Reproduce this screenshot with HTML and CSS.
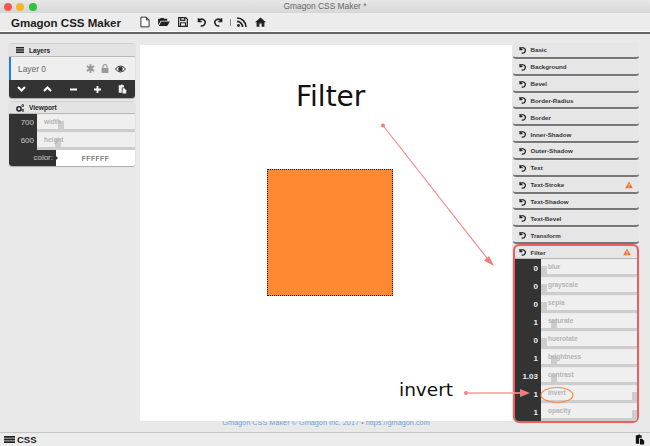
FILE: index.html
```html
<!DOCTYPE html>
<html lang="en">
<head>
    <meta charset="UTF-8">
    <title>Gmagon CSS Maker</title>
    <link rel="stylesheet" href="styles.css">
</head>
<body>
<svg class="defs" width="0" height="0">
    <symbol id="undo" viewBox="0 0 12 12"><path d="M3 1.6V5.4H6.8M3.4 4.8A4 4 0 1 1 5.6 10.4" fill="none" stroke="currentColor" stroke-width="1.9"/></symbol>
    <symbol id="warn" viewBox="0 0 12 12"><path d="M6 .8L11.6 11H.4Z" fill="#e8702a"/><path d="M5.4 4H6.6V8H5.4ZM5.4 8.8H6.6V10H5.4Z" fill="#fff"/></symbol>
    <symbol id="copy" viewBox="0 0 12 12"><path d="M1 1H4V0H6V1H8V4H5V11H1Z" fill="currentColor"/><path d="M6 5H8.5L11 7.5V12H6Z" fill="currentColor"/></symbol>
</svg>
<div class="app">
    <div class="titlebar">
        <span class="light red"></span><span class="light yellow"></span><span class="light green"></span>
        <span class="wintitle">Gmagon CSS Maker *</span>
    </div>
    <div class="toolbar">
        <span class="brand">Gmagon CSS Maker</span>
        <div class="tools">
            <svg width="10" height="12" viewBox="0 0 11 12"><path d="M1 .7H7L10 3.7V11.3H1ZM7 .7V3.7H10" fill="#fff" stroke="#222" stroke-width="1"/></svg>
            <svg width="12" height="10" viewBox="0 0 13 11"><path d="M0 2H2L3 1H6L7 2H10V4H3L0 9ZM3.5 5H13L10 10H.8Z" fill="#222"/></svg>
            <svg width="10" height="10" viewBox="0 0 11 11"><path d="M.7 .7H8.5L10.3 2.5V10.3H.7ZM3 .7V3.7H7.5V.7M2.7 10.3V6.3H8.3V10.3" fill="none" stroke="#222" stroke-width="1.3"/></svg>
            <svg class="tool-undo" width="10" height="10"><use href="#undo"/></svg>
            <svg class="tool-redo" width="10" height="10"><use href="#undo"/></svg>
            <span class="sep"></span>
            <svg width="10" height="10" viewBox="0 0 10 10"><circle cx="1.5" cy="8.5" r="1.4" fill="#222"/><path d="M0 4.4A5.6 5.6 0 0 1 5.6 10M0 1A9 9 0 0 1 9 10" fill="none" stroke="#222" stroke-width="1.7"/></svg>
            <svg width="11" height="10" viewBox="0 0 11 10"><path d="M5.5 .4L11 5.2H9.4V9.8H6.6V6.6H4.4V9.8H1.6V5.2H0Z" fill="#222"/></svg>
        </div>
    </div>
    <div class="main">
        <div class="leftcol">
            <div class="panel">
                <div class="panel-head">
                    <svg width="8" height="6" viewBox="0 0 8 6"><path d="M0 0H8V1.5H0ZM0 2.2H8V3.7H0ZM0 4.4H8V6H0Z" fill="#222"/></svg>
                    <span>Layers</span>
                </div>
                <div class="layer">
                    <span class="layer-name">Layer 0</span>
                    <svg class="layer-ico" width="9" height="9" viewBox="0 0 9 9"><path d="M3.6 0H5.4V2.6L7.7 1.3 8.6 2.8 6.3 4.5 8.6 6.2 7.7 7.7 5.4 6.4V9H3.6V6.4L1.3 7.7.4 6.2 2.7 4.5.4 2.8 1.3 1.3 3.6 2.6Z" fill="#999"/></svg>
                    <svg class="layer-ico" width="8" height="9" viewBox="0 0 8 9"><path d="M2 4V2.6A2 2 0 0 1 6 2.6V4" fill="none" stroke="#999" stroke-width="1.1"/><path d="M.6 4H7.4V9H.6Z" fill="#999"/></svg>
                    <svg class="layer-ico" width="11" height="8" viewBox="0 0 11 8"><path d="M.4 4Q5.5-2 10.6 4 5.5 10 .4 4Z" fill="none" stroke="#333" stroke-width="1"/><circle cx="5.5" cy="4" r="2.3" fill="#333"/></svg>
                </div>
                <div class="layer-actions">
                    <svg width="9" height="6" viewBox="0 0 9 6"><path d="M1 1L4.5 4.5 8 1" fill="none" stroke="#fff" stroke-width="2"/></svg>
                    <svg width="9" height="6" viewBox="0 0 9 6"><path d="M1 5L4.5 1.5 8 5" fill="none" stroke="#fff" stroke-width="2"/></svg>
                    <svg width="7" height="7" viewBox="0 0 7 7"><path d="M0 2.6H7V4.4H0Z" fill="#fff"/></svg>
                    <svg width="7" height="7" viewBox="0 0 7 7"><path d="M2.6 0H4.4V2.6H7V4.4H4.4V7H2.6V4.4H0V2.6H2.6Z" fill="#fff"/></svg>
                    <svg class="white-ico" width="9" height="10"><use href="#copy"/></svg>
                </div>
            </div>
            <div class="panel">
                <div class="panel-head vp-head">
                    <svg width="8" height="8" viewBox="0 0 8 8"><circle cx="3" cy="4.8" r="2.1" fill="none" stroke="#222" stroke-width="1.5"/><circle cx="6.8" cy="1.6" r="1" fill="none" stroke="#222"/><circle cx="6.8" cy="6.4" r="1" fill="none" stroke="#222"/></svg>
                    <span>Viewport</span>
                </div>
                <div class="slider vp">
                    <div class="val">700</div>
                    <div class="track"><span class="name">width</span><span class="thumb" style="left:21px"></span></div>
                </div>
                <div class="slider vp">
                    <div class="val">600</div>
                    <div class="track"><span class="name">height</span><span class="thumb" style="left:18px"></span></div>
                </div>
                <div class="colorrow">
                    <div class="colorlabel">color:</div>
                    <div class="colorval">FFFFFF</div>
                </div>
            </div>
        </div>
        <div class="centercol">
            <div class="canvas">
                <div class="demo-box"></div>
                <span class="note note-filter">Filter</span>
                <span class="note note-invert">invert</span>
            </div>
            <div class="copyright">Gmagon CSS Maker © Gmagon Inc. 2017 • https://gmagon.com</div>
        </div>
        <div class="rightcol">
            <div class="sect"><svg class="sect-undo"><use href="#undo"/></svg><span>Basic</span></div>
            <div class="sect"><svg class="sect-undo"><use href="#undo"/></svg><span>Background</span></div>
            <div class="sect"><svg class="sect-undo"><use href="#undo"/></svg><span>Bevel</span></div>
            <div class="sect"><svg class="sect-undo"><use href="#undo"/></svg><span>Border-Radius</span></div>
            <div class="sect"><svg class="sect-undo"><use href="#undo"/></svg><span>Border</span></div>
            <div class="sect"><svg class="sect-undo"><use href="#undo"/></svg><span>Inner-Shadow</span></div>
            <div class="sect"><svg class="sect-undo"><use href="#undo"/></svg><span>Outer-Shadow</span></div>
            <div class="sect"><svg class="sect-undo"><use href="#undo"/></svg><span>Text</span></div>
            <div class="sect"><svg class="sect-undo"><use href="#undo"/></svg><span>Text-Stroke</span><svg class="sect-warn"><use href="#warn"/></svg></div>
            <div class="sect"><svg class="sect-undo"><use href="#undo"/></svg><span>Text-Shadow</span></div>
            <div class="sect"><svg class="sect-undo"><use href="#undo"/></svg><span>Text-Bevel</span></div>
            <div class="sect"><svg class="sect-undo"><use href="#undo"/></svg><span>Transform</span></div>
            <div class="filter">
                <div class="sect filter-head"><svg class="sect-undo"><use href="#undo"/></svg><span>Filter</span><svg class="sect-warn"><use href="#warn"/></svg></div>
                <div class="slider fl"><div class="val">0</div><div class="track"><span class="name">blur</span><span class="thumb" style="left:0"></span></div></div>
                <div class="slider fl"><div class="val">0</div><div class="track"><span class="name">grayscale</span><span class="thumb" style="left:0"></span></div></div>
                <div class="slider fl"><div class="val">0</div><div class="track"><span class="name">sepia</span><span class="thumb" style="left:0"></span></div></div>
                <div class="slider fl"><div class="val">1</div><div class="track"><span class="name">saturate</span><span class="thumb" style="left:10px"></span></div></div>
                <div class="slider fl"><div class="val">0</div><div class="track"><span class="name">huerotate</span><span class="thumb" style="left:0"></span></div></div>
                <div class="slider fl"><div class="val">1</div><div class="track"><span class="name">brightness</span><span class="thumb" style="left:10px"></span></div></div>
                <div class="slider fl"><div class="val">1.03</div><div class="track"><span class="name">contrast</span><span class="thumb" style="left:10px"></span></div></div>
                <div class="slider fl"><div class="val">1</div><div class="track"><span class="name">invert</span><span class="thumb" style="left:91px"></span></div></div>
                <div class="slider fl"><div class="val">1</div><div class="track"><span class="name">opacity</span><span class="thumb" style="left:91px"></span></div></div>
            </div>
        </div>
    </div>
    <div class="bottombar">
        <svg width="11" height="7" viewBox="0 0 11 7"><path d="M0 0H11V1.8H0ZM0 2.6H11V4.4H0ZM0 5.2H11V7H0Z" fill="#222"/></svg>
        <span class="bottom-label">CSS</span>
        <svg class="bottom-copy" width="10" height="11"><use href="#copy"/></svg>
    </div>
    <svg class="annotations" width="650" height="446" viewBox="0 0 650 446">
        <path d="M383 125.500L490 262" stroke="#f28b8b" stroke-width="1.200" fill="none"/>
        <circle cx="383" cy="125.500" r="2" fill="#f27c7c"/>
        <path d="M494 266L484 260.500 489 256Z" fill="#f27c7c"/>
        <circle cx="466" cy="393" r="2" fill="#f27c7c"/>
        <path d="M466 393H522" stroke="#f79a9a" stroke-width="1.500"/>
        <path d="M530 393L520 389V397Z" fill="#f27c7c"/>
        <ellipse cx="557" cy="395" rx="16" ry="7.500" fill="none" stroke="#ee8c4e" stroke-width="1.200"/>
    </svg>
</div>
</body>
</html>
```

FILE: styles.css
```css
*{
    box-sizing: border-box;
}
body{
    margin: 0;
    font-family: "Liberation Sans", Arial, sans-serif;
    background-color: #e9e9e9;
    color: #222;
    overflow: hidden;
}
.defs{
    display: block;
    height: 0;
}
.app{
    position: relative;
    width: 650px;
    height: 446px;
    display: flex;
    flex-direction: column;
    overflow: hidden;
}

/* title bar */
.titlebar{
    position: relative;
    height: 13px;
    flex: none;
    display: flex;
    align-items: center;
    gap: 4.500px;
    padding-left: 3.500px;
    background: linear-gradient(#e8e8e8, #d6d6d6);
}
.light{
    width: 8px;
    height: 8px;
    border-radius: 50%;
}
.red{ background-color: #f4574f; }
.yellow{ background-color: #f6b42a; }
.green{ background-color: #2fc13f; }
.wintitle{
    position: absolute;
    left: 0;
    right: 0;
    top: 0;
    text-align: center;
    font-size: 8.400px;
    line-height: 13px;
    color: #666;
}

/* toolbar */
.toolbar{
    height: 21px;
    flex: none;
    display: flex;
    align-items: center;
    padding-left: 11px;
    background-color: #ececec;
    border-bottom: 2px solid #666;
    box-shadow: inset 0 -1px 0 #fff;
}
.brand{
    width: 129px;
    flex: none;
    white-space: nowrap;
    font-size: 11.500px;
    font-weight: bold;
    color: #1c1c1c;
}
.tools{
    display: flex;
    align-items: center;
    gap: 8px;
    margin-bottom: 1px;
}
.tool-undo{
    color: #222;
}
.tool-redo{
    color: #222;
    transform: scaleX(-1);
}
.sep{
    width: 1px;
    height: 7px;
    background-color: #888;
    margin-left: -2px;
    margin-right: -2px;
}

/* main area */
.main{
    flex: 1;
    min-height: 0;
    display: flex;
    padding-top: 8px;
}
.leftcol{
    width: 126px;
    margin-left: 9px;
    margin-right: 5px;
    padding-top: 1px;
    flex: none;
}
.panel{
    border-radius: 3px;
    overflow: hidden;
    margin-bottom: 3px;
    box-shadow: 0 1px 1px #aaa;
}
.panel-head{
    height: 14px;
    display: flex;
    align-items: center;
    gap: 5px;
    padding-left: 7px;
    font-size: 6.600px;
    font-weight: bold;
    background-color: #e3e3e3;
    border-bottom: 1px solid #bbb;
    border-top: 1px solid #d0d0d0;
}
.vp-head{
    height: 13px;
}
.layer{
    height: 23px;
    display: flex;
    align-items: center;
    background-color: #efefef;
    border-left: 2px solid #1c7fe8;
    padding-right: 9px;
    gap: 6px;
}
.layer-name{
    flex: 1;
    padding-left: 7px;
    font-size: 8.400px;
    color: #666;
}
.layer-actions{
    height: 18px;
    display: flex;
    align-items: center;
    justify-content: space-between;
    padding: 0 8px;
    background-color: #333;
}
.white-ico{
    color: #f2f2f2;
}

/* sliders */
.slider{
    display: flex;
    background-color: #e9e9e9;
}
.val{
    flex: none;
    position: relative;
    background-color: #333;
    text-align: right;
    padding-right: 3px;
    font-size: 8px;
    color: #ccc;
}
.val::after{
    content: "";
    position: absolute;
    right: -2px;
    top: 50%;
    margin-top: -2px;
    border-left: 2px solid #333;
    border-top: 2px solid transparent;
    border-bottom: 2px solid transparent;
}
.track{
    position: relative;
    flex: 1;
    background-color: #efefef;
    border-bottom: 3px solid #cdcdcd;
    margin-top: 1px;
    padding-left: 7px;
    font-size: 6.500px;
    font-weight: bold;
    color: #b4b4b4;
}
.thumb{
    position: absolute;
    top: 6px;
    bottom: 0;
    width: 6px;
    background-color: #cdcdcd;
}
.name{
    position: relative;
    z-index: 1;
}
.vp{
    height: 18px;
}
.vp .val{
    width: 28px;
    line-height: 18px;
}
.vp .track{
    line-height: 13px;
}
.colorrow{
    height: 16px;
    display: flex;
    background-color: #fff;
}
.colorlabel{
    position: relative;
    width: 47px;
    background-color: #333;
    color: #ccc;
    font-size: 8px;
    line-height: 16px;
    text-align: right;
    padding-right: 3px;
}
.colorlabel::after{
    content: "";
    position: absolute;
    right: -2px;
    top: 6px;
    border-left: 2px solid #333;
    border-top: 2px solid transparent;
    border-bottom: 2px solid transparent;
}
.colorval{
    flex: 1;
    text-align: center;
    font-size: 7px;
    line-height: 17px;
    letter-spacing: .3px;
    color: #444;
}

/* canvas */
.centercol{
    width: 372px;
    flex: none;
    padding-top: 3px;
}
.canvas{
    position: relative;
    z-index: 1;
    height: 376px;
    background-color: #fff;
}
.demo-box{
    position: absolute;
    left: 127px;
    top: 124px;
    width: 126px;
    height: 127px;
    background-color: #ff8833;
    border: 1px dotted #111;
}
.note{
    position: absolute;
    font-family: "Comic Sans MS", "DejaVu Sans", sans-serif;
    color: #111;
    white-space: nowrap;
}
.note-filter{
    left: 156px;
    top: 35px;
    font-size: 28px;
}
.note-invert{
    left: 259px;
    top: 334px;
    font-size: 18.500px;
}
.copyright{
    margin-top: -3px;
    text-align: center;
    font-size: 7.300px;
    line-height: 10px;
    color: #6fa3d8;
}

/* right column */
.rightcol{
    width: 126px;
    margin-left: 1px;
    padding-top: 1px;
    flex: none;
}
.sect{
    height: 15.850px;
    margin-bottom: 1px;
    display: flex;
    align-items: center;
    padding-left: 5px;
    gap: 4.500px;
    font-size: 6.200px;
    font-weight: bold;
    color: #333;
    background-color: #e6e6e6;
    border-radius: 3px;
    border-bottom: 2px solid #777;
}
.sect-undo{
    width: 8px;
    height: 8px;
    flex: none;
    color: #222;
}
.sect-warn{
    width: 8px;
    height: 8px;
    margin-left: auto;
    margin-right: 6px;
}
.filter{
    height: 179px;
    margin-top: -1px;
    background-color: #333;
    border: 2px solid #f25c5c;
    border-radius: 6px;
    overflow: hidden;
}
.filter-head{
    height: 13px;
    margin-bottom: 0;
    border-radius: 0;
    border-bottom: 1px solid #bbb;
    padding-left: 3px;
}
.fl{
    height: 18px;
}
.fl .val{
    width: 26px;
    line-height: 19px;
    font-weight: bold;
    color: #eee;
}
.fl .track{
    line-height: 13px;
}

/* bottom bar */
.bottombar{
    height: 14px;
    flex: none;
    display: flex;
    align-items: center;
    padding: 0 5px 0 4px;
    gap: 2px;
    background-color: #ececec;
    border-top: 1px solid #c6c6c6;
}
.bottom-label{
    font-size: 9.500px;
    font-weight: bold;
}
.bottom-copy{
    margin-left: auto;
    color: #111;
}

/* red arrows and the oval drawn over the shot */
.annotations{
    position: absolute;
    left: 0;
    top: 0;
    z-index: 2;
    pointer-events: none;
}
```
